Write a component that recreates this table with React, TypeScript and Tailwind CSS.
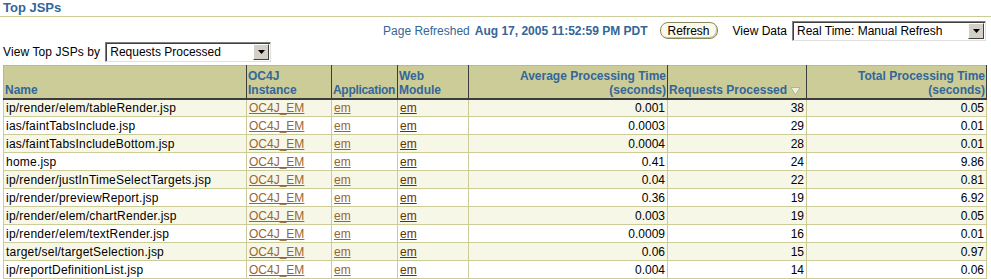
import { FC } from 'react';

interface JspRow {
  name: string;
  avg: string;
  requests: number;
  total: string;
}

const rows: JspRow[] = [
  { name: 'ip/render/elem/tableRender.jsp', avg: '0.001', requests: 38, total: '0.05' },
  { name: 'ias/faintTabsInclude.jsp', avg: '0.0003', requests: 29, total: '0.01' },
  { name: 'ias/faintTabsIncludeBottom.jsp', avg: '0.0004', requests: 28, total: '0.01' },
  { name: 'home.jsp', avg: '0.41', requests: 24, total: '9.86' },
  { name: 'ip/render/justInTimeSelectTargets.jsp', avg: '0.04', requests: 22, total: '0.81' },
  { name: 'ip/render/previewReport.jsp', avg: '0.36', requests: 19, total: '6.92' },
  { name: 'ip/render/elem/chartRender.jsp', avg: '0.003', requests: 19, total: '0.05' },
  { name: 'ip/render/elem/textRender.jsp', avg: '0.0009', requests: 16, total: '0.01' },
  { name: 'target/sel/targetSelection.jsp', avg: '0.06', requests: 15, total: '0.97' },
  { name: 'ip/reportDefinitionList.jsp', avg: '0.004', requests: 14, total: '0.06' },
];

const SelectBox: FC<{ value: string; width: string }> = ({ value, width }) => (
  <div
    className={`${width} h-[20px] flex items-center bg-white border border-t-[#808080] border-l-[#808080] border-r-[#e0e0e0] border-b-[#e0e0e0] shadow-[inset_1px_1px_0_#404040]`}
  >
    <span className="flex-1 pl-[4px] pt-[1px] text-[12px] text-black whitespace-nowrap overflow-hidden">{value}</span>
    <span className="w-[16px] h-[16px] mr-[1px] flex items-center justify-center bg-[#d4d0c8] border border-t-white border-l-white border-r-[#404040] border-b-[#404040]">
      <svg width="7" height="4" viewBox="0 0 7 4">
        <path d="M0 0h7L3.5 4z" fill="#000" />
      </svg>
    </span>
  </div>
);

const SortIcon = () => (
  <svg width="11" height="10" viewBox="0 0 11 10" className="inline-block ml-[3px] mb-[-1px]">
    <path d="M1 1.5h9L5.5 9z" fill="#f0f0dc" stroke="#b5b58a" strokeWidth="1" />
  </svg>
);

const App: FC = () => {
  const th = 'bg-[#cccc99] text-[#336699] font-bold align-bottom px-[1px] pb-[1px] leading-[14px] border-t border-t-[#b9b98c] border-r border-r-[#3c3c3c] border-b-2 border-b-[#3c3c3c] whitespace-nowrap';
  const td = 'h-[18px] px-[2px] py-0 leading-[16px] border border-[#cccc99] whitespace-nowrap';
  const link = 'underline text-[#996633]';

  return (
    <div className="w-[991px] h-[279px] overflow-hidden bg-white text-[12px] text-black" style={{ fontFamily: '"Liberation Sans", Arial, sans-serif' }}>
      <div className="pl-[3px] border-b border-[#cccc99] h-[17px]">
        <h1 className="text-[13px] font-bold text-[#336699] leading-[16px]">Top JSPs</h1>
      </div>

      <div className="flex items-center justify-end mt-[4px] h-[19px] pr-[5px]">
        <span className="text-[#336699]">Page Refreshed</span>
        <span className="ml-[5px] font-bold text-[#336699]">Aug 17, 2005 11:52:59 PM PDT</span>
        <button className="ml-[12px] w-[58px] h-[17px] rounded-[8px] border border-[#8a8a5c] bg-[#f9f9ec] text-[12px] leading-[14px] text-black shadow-[inset_-1px_-1px_0_#c4c4a0]">
          Refresh
        </button>
        <span className="ml-[15px] mr-[5px]">View Data</span>
        <SelectBox value="Real Time: Manual Refresh" width="w-[194px]" />
      </div>

      <div className="flex items-center pl-[3px] mt-[1px] h-[21px]">
        <span className="mr-[5px] tracking-[0.1px]">View Top JSPs by</span>
        <SelectBox value="Requests Processed" width="w-[166px]" />
      </div>

      <table className="ml-[3px] mt-[3px] w-[983px] table-fixed border-collapse">
        <colgroup>
          <col className="w-[243px]" />
          <col className="w-[85px]" />
          <col className="w-[66px]" />
          <col className="w-[71px]" />
          <col className="w-[199px]" />
          <col className="w-[139px]" />
          <col className="w-[180px]" />
        </colgroup>
        <thead>
          <tr className="h-[33px]">
            <th className={`${th} text-left border-l border-l-[#b9b98c]`}>Name</th>
            <th className={`${th} text-left`}>OC4J<br />Instance</th>
            <th className={`${th} text-left tracking-[-0.3px]`}>Application</th>
            <th className={`${th} text-left`}>Web<br />Module</th>
            <th className={`${th} text-right`}>Average Processing Time<br />(seconds)</th>
            <th className={`${th} text-left`}>Requests Processed<SortIcon /></th>
            <th className={`${th} text-right`}>Total Processing Time<br />(seconds)</th>
          </tr>
        </thead>
        <tbody>
          {rows.map((r, i) => (
            <tr key={r.name} className={i % 2 === 0 ? 'bg-[#f7f7e7]' : 'bg-white'}>
              <td className={`${td} text-left tracking-[0.22px]`}>{r.name}</td>
              <td className={`${td} text-left`}><a className={link}>OC4J_EM</a></td>
              <td className={`${td} text-left`}><a className={link}>em</a></td>
              <td className={`${td} text-left`}><a className="underline text-[#663300]">em</a></td>
              <td className={`${td} text-right`}>{r.avg}</td>
              <td className={`${td} text-right`}>{r.requests}</td>
              <td className={`${td} text-right`}>{r.total}</td>
            </tr>
          ))}
        </tbody>
      </table>
    </div>
  );
};

export default App;
